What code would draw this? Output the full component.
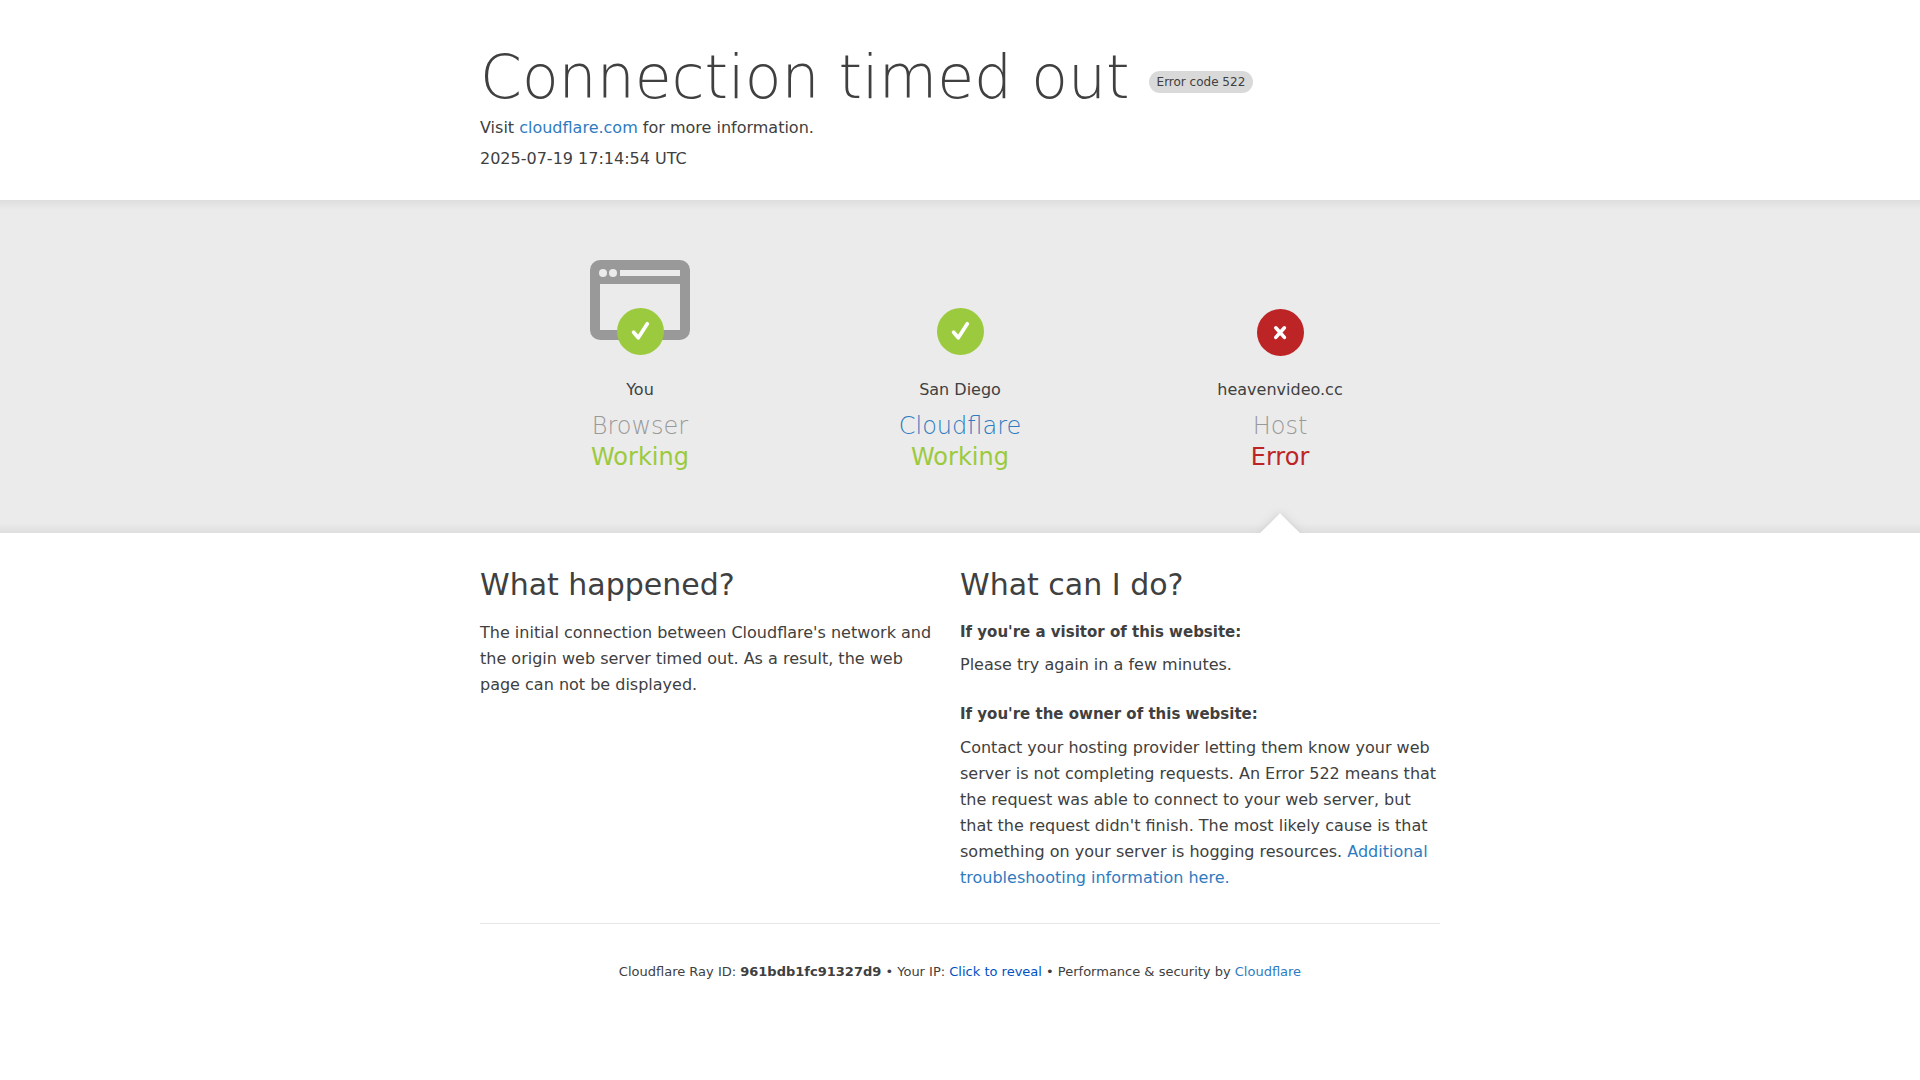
<svelte:head><title>Connection timed out</title></svelte:head>

<header class="wrap head">
  <h1>
    <span class="title">Connection timed out</span>
    <span class="code">Error code 522</span>
  </h1>
  <p>Visit <a href="#info">cloudflare.com</a> for more information.</p>
  <p class="time">2025-07-19 17:14:54 UTC</p>
</header>

<section class="band">
  <div class="wrap statuses">
    <div class="status">
      <div class="icon">
        <svg class="browser" viewBox="0 0 100 80" width="100" height="80" aria-hidden="true">
          <path fill="#999" fill-rule="evenodd" d="M10 0H90A10 10 0 0 1 100 10V70A10 10 0 0 1 90 80H10A10 10 0 0 1 0 70V10A10 10 0 0 1 10 0ZM10 24V70H90V24ZM30 10V16H90V10Z" />
          <circle cx="13" cy="13" r="4" fill="#ebebeb" />
          <circle cx="23" cy="13" r="4" fill="#ebebeb" />
        </svg>
        <svg class="mark" viewBox="0 0 48 48" width="48" height="48" aria-hidden="true">
          <circle cx="24.5" cy="23.5" r="23.5" fill="#9bca3e" />
          <path d="M17.6 24.2L22.3 29.8L31.3 15.8" fill="none" stroke="#fff" stroke-width="3.7" stroke-linecap="round" stroke-linejoin="round" />
        </svg>
      </div>
      <span class="place">You</span>
      <h3>Browser</h3>
      <span class="state ok">Working</span>
    </div>
    <div class="status">
      <div class="icon">
        <svg class="mark" viewBox="0 0 48 48" width="48" height="48" aria-hidden="true">
          <circle cx="24.5" cy="23.5" r="23.5" fill="#9bca3e" />
          <path d="M17.6 24.2L22.3 29.8L31.3 15.8" fill="none" stroke="#fff" stroke-width="3.7" stroke-linecap="round" stroke-linejoin="round" />
        </svg>
      </div>
      <span class="place">San Diego</span>
      <h3><a href="#cloudflare">Cloudflare</a></h3>
      <span class="state ok">Working</span>
    </div>
    <div class="status failing">
      <div class="icon">
        <svg class="mark" viewBox="0 0 48 48" width="48" height="48" aria-hidden="true">
          <circle cx="24.5" cy="24.5" r="23.5" fill="#bd2426" />
          <path d="M19.8 19.8L28.4 29.4M28.4 19.8L19.8 29.4" fill="none" stroke="#fff" stroke-width="3.6" stroke-linecap="round" />
        </svg>
      </div>
      <span class="place">heavenvideo.cc</span>
      <h3>Host</h3>
      <span class="state bad">Error</span>
    </div>
  </div>
</section>

<main class="wrap columns">
  <section class="happened">
    <h2>What happened?</h2>
    <p>The initial connection between Cloudflare's network and the origin web server timed out. As a result, the web page can not be displayed.</p>
  </section>
  <section>
    <h2>What can I do?</h2>
    <h4>If you're a visitor of this website:</h4>
    <p class="visitor">Please try again in a few minutes.</p>
    <h4>If you're the owner of this website:</h4>
    <p>Contact your hosting provider letting them know your web server is not completing requests. An Error 522 means that the request was able to connect to your web server, but that the request didn't finish. The most likely cause is that something on your server is hogging resources. <a href="#help">Additional troubleshooting information here.</a></p>
  </section>
</main>

<footer class="wrap">
  Cloudflare Ray ID: <strong>961bdb1fc91327d9</strong> &bull; Your IP: <button type="button">Click to reveal</button> &bull; Performance &amp; security by <a href="#cloudflare">Cloudflare</a>
</footer>

<style>
  :global(body) {
    margin: 0;
    background: #fff;
    color: #404040;
    font: 16px/24px "DejaVu Sans", sans-serif;
  }
  h1, h2, h3, h4, p { margin: 0; font-weight: 400; }
  a { color: #2f7bbf; text-decoration: none; }
  .wrap { box-sizing: border-box; width: 100%; max-width: 960px; margin: 0 auto; }
  .head { padding: 41px 0 29px; }
  h1 { display: flex; flex-wrap: wrap; align-items: center; column-gap: 19px; line-height: 72px; }
  .title { font-size: 60px; font-weight: 200; }
  .code { padding: 2px 8px; margin-top: 10px; border-radius: 20px; background: #d9d9d9; font-size: 12px; line-height: 18px; }
  .head p { margin-top: 3px; }
  .head .time { margin-top: 7px; }
  .band {
    background: linear-gradient(#dedede, #ebebeb 3%, #ebebeb 97%, #dedede);
  }
  .statuses { display: grid; grid-template-columns: repeat(3, 1fr); }
  .status { display: flex; flex-direction: column; align-items: center; position: relative; padding: 60px 0 60px; }
  .icon { position: relative; display: flex; justify-content: center; width: 100px; height: 96px; }
  .mark { position: absolute; bottom: 0; }
  .place { margin-top: 22px; }
  h3 { margin-top: 9px; font-size: 24px; font-weight: 200; line-height: 31px; color: #999; }
  .state { font-size: 24px; line-height: 31px; }
  .ok { color: #9bca3e; }
  .bad { color: #bd2426; }
  .failing { overflow: hidden; }
  .failing::after {
    content: "";
    position: absolute;
    bottom: -14px;
    width: 28px;
    height: 28px;
    transform: rotate(45deg);
    background: #fff;
    box-shadow: 0 0 10px #cccccc;
  }
  .columns { display: grid; grid-template-columns: 1fr 1fr; padding: 32px 0; line-height: 26px; border-bottom: 1px solid #e6e6e6; }
  .happened { padding-right: 24px; }
  h2 { margin-bottom: 16px; font-size: 30px; line-height: 39px; }
  h4 { margin-bottom: 8px; font-size: 15px; font-weight: 700; line-height: 24px; }
  h4:last-of-type { margin-bottom: 9px; }
  .visitor { margin-bottom: 24px; }
  footer { padding: 36px 0; text-align: center; font-size: 13px; line-height: 24px; }
  button { padding: 0; border: 0; background: none; color: #0051c3; font: inherit; cursor: pointer; }
</style>
